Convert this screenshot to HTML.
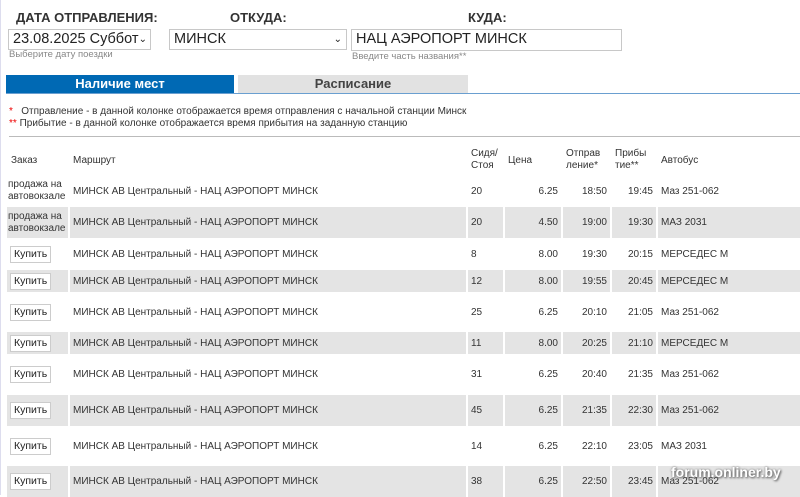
<!DOCTYPE html>
<html><head><meta charset="utf-8"><style>
body{margin:0;width:800px;height:495px;overflow:hidden;background:#fff;font-family:"Liberation Sans",Arial,sans-serif;color:#333;position:relative}
.a{position:absolute}
.lbl{font-size:13px;font-weight:bold;color:#333}
.box{border:1px solid #c8c8c8;background:#fff;font-size:14.5px;color:#222;box-sizing:border-box;padding:0 4px;line-height:19px;white-space:nowrap;overflow:hidden}
.hint{font-size:9.5px;color:#888;white-space:nowrap}
table{position:absolute;left:5px;top:145px;border-collapse:separate;border-spacing:2px 0;font-size:10px;color:#333;table-layout:fixed;width:797px}
td{padding:0 3px;vertical-align:middle;white-space:nowrap;overflow:hidden}
tr.g td{background:#e4e4e4}
.r{text-align:right}
.btn{display:inline-block;border:1px solid #ccc;background:#fff;padding:1px 3px;font-size:10.5px;line-height:13px;color:#222}
</style></head><body>
<div class="a" style="left:0;top:0;width:1px;height:495px;background:#dde"></div>
<div class="a lbl" style="left:16px;top:10px">ДАТА ОТПРАВЛЕНИЯ:</div>
<div class="a lbl" style="left:230px;top:10px">ОТКУДА:</div>
<div class="a lbl" style="left:468px;top:10px">КУДА:</div>
<div class="a box" style="left:8px;top:29px;width:143px;height:21px;padding-right:14px">23.08.2025 Суббота<span style="position:absolute;right:3px;top:0;font-size:10px;background:#fff">⌄</span></div>
<div class="a box" style="left:169px;top:29px;width:178px;height:21px">МИНСК<span style="position:absolute;right:4px;font-size:10px">⌄</span></div>
<div class="a box" style="left:351px;top:29px;width:271px;height:22px">НАЦ АЭРОПОРТ МИНСК</div>
<div class="a hint" style="left:9px;top:49px">Выберите дату поездки</div>
<div class="a hint" style="left:352px;top:51px">Введите часть названия**</div>
<div class="a" style="left:6px;top:75px;width:228px;height:18px;background:#0069b4;color:#fff;font-weight:bold;font-size:13px;text-align:center;line-height:18px">Наличие мест</div>
<div class="a" style="left:238px;top:75px;width:230px;height:18px;background:#e2e2e2;color:#444;font-weight:bold;font-size:13px;text-align:center;line-height:18px">Расписание</div>
<div class="a" style="left:6px;top:93px;width:794px;height:1px;background:#6a9fd0"></div>
<div class="a" style="left:9px;top:106px;font-size:10px;line-height:12px;color:#333;white-space:nowrap"><span style="color:#e00">*</span>&nbsp;&nbsp; Отправление - в данной колонке отображается время отправления с начальной станции Минск<br><span style="color:#e00">**</span> Прибытие - в данной колонке отображается время прибытия на заданную станцию</div>
<div class="a" style="left:9px;top:136px;width:791px;height:1px;background:#bbb"></div>
<table>
<colgroup><col style="width:61px"><col style="width:396px"><col style="width:35px"><col style="width:56px"><col style="width:47px"><col style="width:44px"><col></colgroup>
<tr style="height:30px"><td style="padding-left:4px">Заказ</td><td>Маршрут</td><td style="line-height:12px">Сидя/<br>Стоя</td><td>Цена</td><td style="line-height:12px">Отправ<br>ление*</td><td style="line-height:12px">Прибы<br>тие**</td><td>Автобус</td></tr>
<tr style="height:32px"><td style="line-height:12px;padding:0 1px">продажа на<br>автовокзале</td><td>МИНСК АВ Центральный - НАЦ АЭРОПОРТ МИНСК</td><td>20</td><td class="r">6.25</td><td class="r">18:50</td><td class="r">19:45</td><td>Маз 251-062</td></tr>
<tr class="g" style="height:31px"><td style="line-height:12px;padding:0 1px">продажа на<br>автовокзале</td><td>МИНСК АВ Центральный - НАЦ АЭРОПОРТ МИНСК</td><td>20</td><td class="r">4.50</td><td class="r">19:00</td><td class="r">19:30</td><td>МАЗ 2031</td></tr>
<tr style="height:32px"><td><span class="btn">Купить</span></td><td>МИНСК АВ Центральный - НАЦ АЭРОПОРТ МИНСК</td><td>8</td><td class="r">8.00</td><td class="r">19:30</td><td class="r">20:15</td><td>МЕРСЕДЕС М</td></tr>
<tr class="g" style="height:22px"><td><span class="btn">Купить</span></td><td>МИНСК АВ Центральный - НАЦ АЭРОПОРТ МИНСК</td><td>12</td><td class="r">8.00</td><td class="r">19:55</td><td class="r">20:45</td><td>МЕРСЕДЕС М</td></tr>
<tr style="height:40px"><td><span class="btn">Купить</span></td><td>МИНСК АВ Центральный - НАЦ АЭРОПОРТ МИНСК</td><td>25</td><td class="r">6.25</td><td class="r">20:10</td><td class="r">21:05</td><td>Маз 251-062</td></tr>
<tr class="g" style="height:22px"><td><span class="btn">Купить</span></td><td>МИНСК АВ Центральный - НАЦ АЭРОПОРТ МИНСК</td><td>11</td><td class="r">8.00</td><td class="r">20:25</td><td class="r">21:10</td><td>МЕРСЕДЕС М</td></tr>
<tr style="height:41px"><td><span class="btn">Купить</span></td><td>МИНСК АВ Центральный - НАЦ АЭРОПОРТ МИНСК</td><td>31</td><td class="r">6.25</td><td class="r">20:40</td><td class="r">21:35</td><td>Маз 251-062</td></tr>
<tr class="g" style="height:31px"><td><span class="btn">Купить</span></td><td>МИНСК АВ Центральный - НАЦ АЭРОПОРТ МИНСК</td><td>45</td><td class="r">6.25</td><td class="r">21:35</td><td class="r">22:30</td><td>Маз 251-062</td></tr>
<tr style="height:40px"><td><span class="btn">Купить</span></td><td>МИНСК АВ Центральный - НАЦ АЭРОПОРТ МИНСК</td><td>14</td><td class="r">6.25</td><td class="r">22:10</td><td class="r">23:05</td><td>МАЗ 2031</td></tr>
<tr class="g" style="height:31px"><td><span class="btn">Купить</span></td><td>МИНСК АВ Центральный - НАЦ АЭРОПОРТ МИНСК</td><td>38</td><td class="r">6.25</td><td class="r">22:50</td><td class="r">23:45</td><td>Маз 251-062</td></tr>
</table>
<div class="a" style="left:671px;top:464px;font-size:14px;font-weight:bold;color:#fff;text-shadow:0 0 2px #777,1px 1px 2px #555">forum.onliner.by</div>
</body></html>
